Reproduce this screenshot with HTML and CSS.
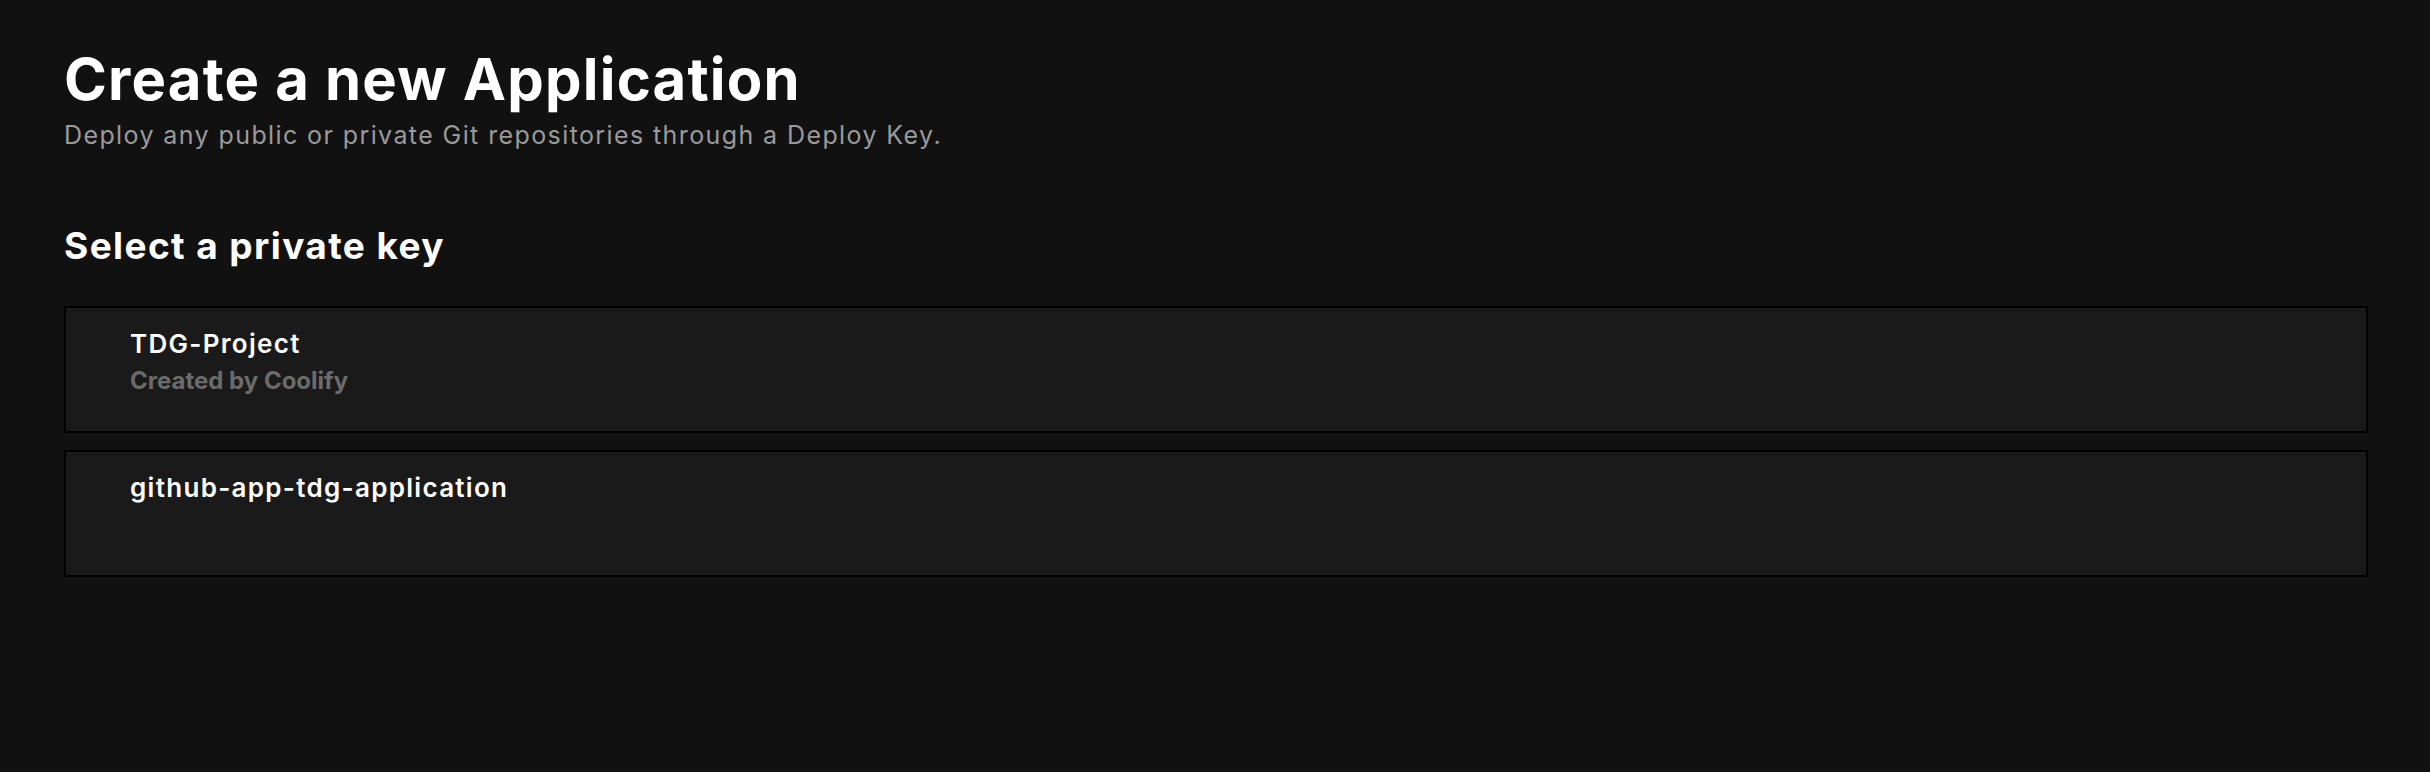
FILE: index.html
```html
<!DOCTYPE html>
<html lang="en">
<head>
<meta charset="utf-8">
<title>Create a new Application</title>
<link rel="stylesheet" href="styles.css">
</head>
<body>
<main class="page">
  <header class="intro">
    <h1 class="title">Create a new Application</h1>
    <p class="subtitle">Deploy any public or private Git repositories through a Deploy Key.</p>
  </header>
  <section class="keys">
    <h2 class="section-title">Select a private key</h2>
    <div class="key-list">
      <div class="key-card">
        <div class="key-name">TDG-Project</div>
        <div class="key-desc">Created by Coolify</div>
      </div>
      <div class="key-card">
        <div class="key-name">github-app-tdg-application</div>
      </div>
    </div>
  </section>
</main>
</body>
</html>
```

FILE: styles.css
```css
* { box-sizing: border-box; }
html, body {
  margin: 0;
  padding: 0;
  background: #111111;
  color: #ffffff;
  font-family: Inter, "Noto Sans", "Liberation Sans", sans-serif;
}
.page {
  padding: 44px 62px 0 64px;
}
.intro {
  display: flex;
  flex-direction: column;
  gap: 5px;
}
.title {
  margin: 0;
  font-size: 58px;
  line-height: 70px;
  font-weight: 700;
  letter-spacing: 1.2px;
  color: #ffffff;
}
.subtitle {
  margin: 0;
  font-size: 25px;
  line-height: 32px;
  font-weight: 400;
  letter-spacing: 1.4px;
  color: #9a9a9a;
}
.keys {
  margin-top: 73px;
}
.section-title {
  margin: 0 0 38px 0;
  font-size: 37px;
  line-height: 44px;
  font-weight: 700;
  letter-spacing: 1.4px;
  color: #ffffff;
}
.key-list {
  display: flex;
  flex-direction: column;
  gap: 17px;
}
.key-card {
  height: 127px;
  background: #1a1a1a;
  border: 2px solid #000000;
  padding: 20px 64px;
  display: flex;
  flex-direction: column;
  gap: 5px;
}
.key-name {
  font-size: 26px;
  line-height: 32px;
  font-weight: 600;
  letter-spacing: 1.3px;
  color: #ffffff;
}
.key-desc {
  font-size: 24px;
  line-height: 32px;
  font-weight: 700;
  color: #6b6b6b;
}
```
